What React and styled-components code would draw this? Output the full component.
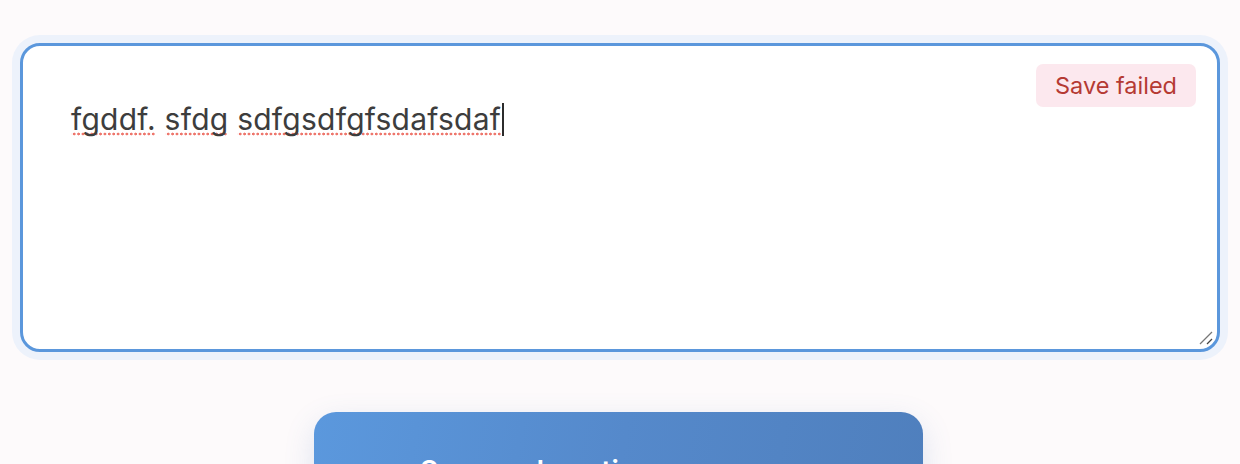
import React from 'react';
import styled, { createGlobalStyle } from 'styled-components';

const GlobalStyle = createGlobalStyle`
  html, body {
    margin: 0;
    background: #fdfafb;
    font-family: Inter, "Noto Sans", sans-serif;
  }
`;

const Page = styled.main`
  display: flex;
  flex-direction: column;
  align-items: center;
  gap: 60px;
  padding: 43px 20px 0;
`;

const Editor = styled.div`
  position: relative;
  box-sizing: border-box;
  width: 100%;
  height: 309px;
  padding: 48px;
  background: #ffffff;
  border: 3px solid #5b97dc;
  border-radius: 20px;
  box-shadow: 0 0 0 8px #edf2fb;
  color: #3d3d3d;
  font-size: 30px;
  line-height: 1.7;
  letter-spacing: 0.25px;
`;

const Misspelled = styled.span`
  background-image: radial-gradient(circle, #ee766c 1.2px, transparent 1.7px);
  background-size: 4.4px 4px;
  background-repeat: repeat-x;
  background-position: 1px calc(100% - 1px);
`;

const Caret = styled.span`
  display: inline-block;
  width: 2px;
  height: 33px;
  margin-left: 1px;
  background: #2c2c2c;
  vertical-align: -6px;
`;

const StatusBadge = styled.span`
  position: absolute;
  top: 18px;
  right: 21px;
  padding: 8px 19px;
  border-radius: 7px;
  background: #fce8ee;
  color: #b53a33;
  font-size: 23.5px;
  line-height: 27px;
  letter-spacing: 0;
`;

const Grip = styled.svg`
  position: absolute;
  right: 3px;
  bottom: 3px;
`;

const SaveButton = styled.button`
  display: flex;
  justify-content: flex-start;
  box-sizing: border-box;
  width: 609px;
  margin-right: 3px;
  padding: 38px 106px;
  border: none;
  border-radius: 22px;
  background: linear-gradient(100deg, #5b98dd 0%, #5589cb 50%, #4f7fbd 100%);
  box-shadow: 0 10px 30px rgba(80, 120, 190, 0.18);
  color: #ffffff;
  font-family: Inter, "Noto Sans", sans-serif;
  font-size: 28px;
  font-weight: 600;
  line-height: 1.5;
  cursor: pointer;
`;

const words = ['fgddf.', 'sfdg', 'sdfgsdfgfsdafsdaf'];

const App = () => {
  return (
    <>
      <GlobalStyle />
      <Page>
        <Editor role='textbox' aria-multiline='true'>
          {words.map((word, i) => (
            <React.Fragment key={word}>
              <Misspelled>{word}</Misspelled>
              {i < words.length - 1 && ' '}
            </React.Fragment>
          ))}
          <Caret />
          <StatusBadge>Save failed</StatusBadge>
          <Grip width='16' height='16' viewBox='0 0 16 16'>
            <line x1='2' y1='14' x2='14' y2='2' stroke='#777' strokeWidth='1.3' />
            <line x1='9' y1='14' x2='14' y2='9' stroke='#444' strokeWidth='1.3' />
          </Grip>
        </Editor>
        <SaveButton>Save and continue</SaveButton>
      </Page>
    </>
  );
};

export default App;
